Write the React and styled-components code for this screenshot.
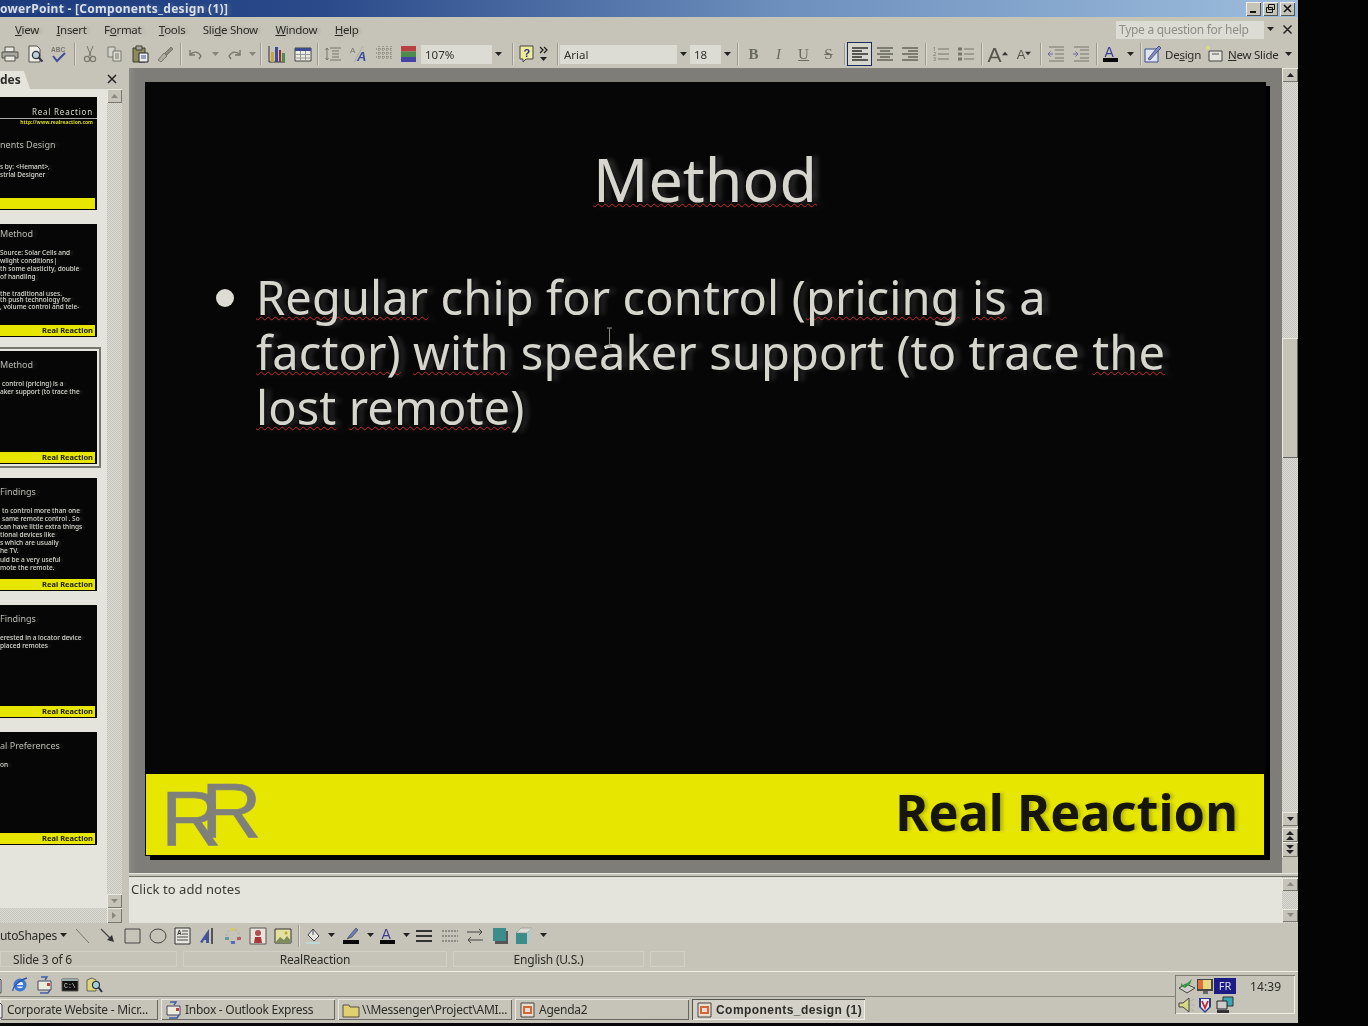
import React from "react";
import styled, { createGlobalStyle, css } from "styled-components";

const UI = `"Noto Sans", "Open Sans", "Liberation Sans", sans-serif`;
const FACE = "#c6c4b8";
const PAPER = "#e4e4dc";
const DITHER = css`
  background: repeating-conic-gradient(#dcdcd4 0 25%, #c4c4ba 0 50%) 0 0 / 2px 2px;
`;

const Global = createGlobalStyle`
  html, body { margin: 0; padding: 0; background: #050505; }
  body { font-family: ${UI}; }
`;

const Screen = styled.div`
  width: 1368px;
  height: 1026px;
  background: linear-gradient(90deg, #0a0d0a 0, #050505 40px, #0b070b 70px, #040404 100%);
  overflow: hidden;
`;
const Window = styled.div`
  width: 1298px;
  height: 1023px;
  display: flex;
  flex-direction: column;
  background: ${FACE};
  overflow: hidden;
  filter: blur(0.45px);
  color: #2c2c28;
  font-size: 12px;
`;

const TitleBar = styled.div`
  height: 17px;
  flex: none;
  display: flex;
  align-items: center;
  justify-content: space-between;
  padding-right: 3px;
  background: linear-gradient(90deg, #1c3a7c 0, #2a4a8a 25%, #6c8fbd 60%, #9dbcdc 100%);
`;
const TitleText = styled.span`
  font-weight: 700;
  font-size: 12px;
  color: #d9dfe9;
  letter-spacing: 0.28px;
  text-shadow: 3px 0 3px rgba(255, 255, 255, 0.15);
`;
const Caption = styled.div`
  display: flex;
  gap: 2px;
`;
const CaptionBtn = styled.span`
  width: 15px;
  height: 14px;
  background: ${FACE};
  box-shadow: inset 1px 1px 0 #eeeee6, inset -1px -1px 0 #55554f;
  display: flex;
  align-items: center;
  justify-content: center;
`;

const MenuBar = styled.div`
  height: 25px;
  flex: none;
  display: flex;
  align-items: center;
  justify-content: space-between;
  padding: 0 5px 0 15px;
`;
const Menus = styled.div`
  display: flex;
  gap: 17.5px;
`;
const Menu = styled.span`
  font-size: 11.5px;
  letter-spacing: -0.3px;
  text-shadow: 3px 0 3px rgba(0, 0, 0, 0.12);
  u { text-underline-offset: 1px; }
`;
const HelpWrap = styled.div`
  display: flex;
  align-items: center;
  gap: 6px;
`;
const HelpBox = styled.div`
  width: 160px;
  height: 18px;
  background: #dcdcd4;
  color: #8e8e86;
  font-size: 12px;
  letter-spacing: -0.28px;
  display: flex;
  align-items: center;
  justify-content: space-between;
  padding-left: 3px;
  box-sizing: border-box;
`;
const HelpArrow = styled.span`
  width: 12px;
  height: 100%;
  background: ${FACE};
  display: flex;
  align-items: center;
  justify-content: center;
`;

const ToolBar = styled.div`
  height: 26px;
  flex: none;
  display: flex;
  align-items: center;
  margin-left: -3px;
  padding-bottom: 2px;
  box-sizing: border-box;
`;
const Tool = styled.span`
  flex: none;
  width: ${(p) => p.$w || 25}px;
  height: 24px;
  box-sizing: border-box;
  display: flex;
  align-items: center;
  justify-content: center;
  font-size: 12px;
  ${(p) =>
    p.$on &&
    css`
      border: 1px solid #1c2c5c;
      background: #d6d6cc;
    `}
`;
const Sep = styled.span`
  flex: none;
  width: ${(p) => p.$w || 6}px;
  height: 22px;
  display: flex;
  justify-content: center;
  &::before {
    content: "";
    width: 1px;
    background: #9a9a90;
    box-shadow: 1px 0 0 #dedcd2;
  }
`;
const Combo = styled.span`
  flex: none;
  width: ${(p) => p.$w}px;
  height: 19px;
  background: #dcdcd4;
  display: flex;
  align-items: center;
  justify-content: space-between;
  box-sizing: border-box;
  padding-left: 4px;
  font-size: 11.5px;
  color: #33332e;
`;
const ComboArrow = styled.span`
  width: 13px;
  height: 100%;
  background: ${FACE};
  display: flex;
  align-items: center;
  justify-content: center;
`;
const StyleLetter = styled.span`
  font-family: "Liberation Serif", serif;
  font-size: 15px;
  color: #6a6a62;
  font-weight: ${(p) => (p.$b ? 700 : 400)};
  font-style: ${(p) => (p.$i ? "italic" : "normal")};
  text-decoration: ${(p) => (p.$u ? "underline" : p.$s ? "line-through" : "none")};
`;
const BigA = styled.span`
  font-family: "Liberation Sans", sans-serif;
  font-size: ${(p) => p.$size}px;
  font-weight: 400;
  color: #55554e;
  line-height: 1;
`;
const ButtonLabel = styled.span`
  flex: none;
  width: ${(p) => p.$w}px;
  padding-left: ${(p) => p.$pad || 0}px;
  box-sizing: border-box;
  font-size: 11.5px;
  letter-spacing: -0.25px;
  white-space: nowrap;
  u { text-underline-offset: 1px; }
`;

const Editor = styled.div`
  height: 855px;
  flex: none;
  display: flex;
`;

const Panel = styled.aside`
  width: 129px;
  flex: none;
  display: flex;
  flex-direction: column;
`;
const PanelHead = styled.div`
  height: 21px;
  flex: none;
  display: flex;
  align-items: flex-end;
  justify-content: space-between;
  padding-right: 12px;
`;
const PanelTab = styled.span`
  width: 30px;
  height: 18px;
  background: ${PAPER};
  clip-path: polygon(0 0, 24px 0, 100% 100%, 0 100%);
  font-weight: 700;
  font-size: 12px;
  line-height: 18px;
`;
const PanelClose = styled.span`
  align-self: center;
  display: flex;
  margin-top: 1px;
`;
const PanelBody = styled.div`
  flex: 1;
  min-height: 0;
  display: flex;
  width: 122px;
`;
const ThumbList = styled.div`
  width: 107px;
  flex: none;
  background: ${PAPER};
  padding-top: 8px;
  box-sizing: border-box;
  display: flex;
  flex-direction: column;
  gap: 14px;
  overflow: hidden;
`;
const Thumb = styled.div`
  width: 97px;
  height: 113px;
  flex: none;
  background: #060606;
  color: #d8d8d0;
  display: flex;
  flex-direction: column;
  ${(p) =>
    p.$selected &&
    css`
      box-shadow: 0 0 0 2px #e8e8e0, 0 0 0 4px #77776f;
    `}
`;
const ThumbContent = styled.div`
  flex: 1;
  min-height: 0;
  overflow: hidden;
`;
const ThumbBrand = styled.div`
  font-size: 8px;
  letter-spacing: 0.8px;
  text-align: right;
  padding: 9px 4px 1px 0;
  border-bottom: 1px solid #aaa;
  white-space: nowrap;
`;
const ThumbUrl = styled.div`
  font-size: 5px;
  line-height: 7px;
  font-weight: 700;
  color: #dede10;
  text-align: right;
  padding-right: 4px;
`;
const ThumbTitle = styled.div`
  font-size: 9px;
  line-height: 12px;
  color: #b8b8b0;
  margin-top: ${(p) => p.$top ?? 4}px;
  white-space: nowrap;
  text-shadow: 4px 0 3px rgba(255, 255, 255, 0.12);
`;
const ThumbLine = styled.div`
  font-size: 6.5px;
  line-height: ${(p) => p.$h || 8}px;
  height: ${(p) => p.$h || 8}px;
  margin-top: ${(p) => p.$top || 0}px;
  padding-left: ${(p) => p.$x || 0}px;
  font-weight: 500;
  white-space: nowrap;
  text-shadow: 3px 0 2px rgba(255, 255, 255, 0.14);
`;
const ThumbFoot = styled.div`
  height: 11px;
  flex: none;
  margin: 0 2px 1px 0;
  background: #e6e600;
  color: #20200a;
  font-size: 7.5px;
  font-weight: 700;
  line-height: 11px;
  text-align: right;
  padding-right: 2px;
  white-space: nowrap;
`;
const ThumbScroll = styled.div`
  width: 15px;
  flex: none;
  display: flex;
  flex-direction: column;
  justify-content: space-between;
  ${DITHER}
`;
const ScrollBtn = styled.span`
  width: ${(p) => p.$w || 15}px;
  height: ${(p) => p.$h || 14}px;
  flex: none;
  background: ${FACE};
  box-shadow: inset 1px 1px 0 #e8e8e0, inset -1px -1px 0 #77776f;
  display: flex;
  align-items: center;
  justify-content: center;
`;
const HScroll = styled.div`
  height: 15px;
  width: 122px;
  flex: none;
  display: flex;
  justify-content: flex-end;
  ${DITHER}
`;

const Center = styled.main`
  flex: 1;
  min-width: 0;
  display: flex;
  flex-direction: column;
`;
const UpperRow = styled.div`
  height: 805px;
  flex: none;
  display: flex;
`;
const Workspace = styled.div`
  flex: 1;
  min-width: 0;
  background: linear-gradient(90deg, #8a8984 0, #7e7d78 8px);
  padding: 14px 0 0 17px;
`;
const Slide = styled.section`
  width: 1120px;
  height: 774px;
  background: #060606;
  box-shadow: -1px 0 0 #000, 4px 4px 0 #000;
  display: flex;
  flex-direction: column;
  position: relative;
  color: #d6d6ce;
`;
const SlideBody = styled.div`
  flex: 1;
  min-height: 0;
  display: flex;
  flex-direction: column;
`;
const SlideTitle = styled.h1`
  margin: 57px 0 0;
  font-family: "Noto Sans", sans-serif;
  font-size: 61px;
  line-height: 80px;
  font-weight: 400;
  text-align: center;
  padding-right: 2px;
  text-shadow: 6px 0 5px rgba(255, 255, 255, 0.14);
`;
const Bullet = styled.div`
  display: flex;
  align-items: flex-start;
  margin: 51px 0 0 70px;
`;
const Dot = styled.span`
  width: 18px;
  height: 18px;
  border-radius: 50%;
  background: #dcdcd4;
  flex: none;
  margin: 19px 22px 0 0;
`;
const BulletText = styled.div`
  font-size: 47px;
  line-height: 55px;
  white-space: nowrap;
  letter-spacing: 0.1px;
  text-shadow: 6px 0 5px rgba(255, 255, 255, 0.14);
`;
const Misspelled = styled.span`
  text-decoration: underline wavy #c22a2a 1px;
  text-underline-offset: 1px;
  text-decoration-skip-ink: none;
`;
const SlideFoot = styled.footer`
  height: 81px;
  flex: none;
  margin: 0 2px 1px 0;
  background: #e6e600;
  display: flex;
  align-items: center;
  justify-content: space-between;
  padding: 0 26px 0 21px;
`;
const Logo = styled.div`
  width: 92px;
  height: 62px;
  position: relative;
  font-family: "Liberation Sans", sans-serif;
  font-size: 77px;
  line-height: 62px;
  color: #80807a;
  -webkit-text-stroke: 0.6px #80807a;
`;
const LogoLetter = styled.span`
  position: absolute;
  left: ${(p) => p.$x}px;
  top: ${(p) => p.$y}px;
  transform: scaleX(1.09);
  transform-origin: 0 50%;
`;
const Brand = styled.div`
  font-family: "Noto Sans", sans-serif;
  font-weight: 700;
  font-size: 50.5px;
  color: #16160a;
  white-space: nowrap;
  margin-top: -6px;
  text-shadow: 3px 0 3px rgba(60, 60, 0, 0.25);
`;
const Ibeam = styled.svg`
  position: absolute;
  left: 460px;
  top: 245px;
`;

const MainScroll = styled.div`
  width: 16px;
  flex: none;
  display: flex;
  flex-direction: column;
  background: ${FACE};
`;
const Track = styled.div`
  height: 730px;
  flex: none;
  ${DITHER}
  padding-top: 256px;
  box-sizing: border-box;
`;
const ScrollThumb = styled.div`
  height: 120px;
  background: ${FACE};
  box-shadow: inset 1px 1px 0 #e8e8e0, inset -1px -1px 0 #66665f;
`;
const ScrollGap = styled.div`
  height: 2px;
  flex: none;
`;
const NotesGap = styled.div`
  height: 3px;
  flex: none;
  border-bottom: 1px solid #6e6e68;
  box-shadow: inset 0 1px 0 #e8e8e0;
`;
const NotesRow = styled.div`
  flex: 1;
  min-height: 0;
  display: flex;
`;
const Notes = styled.div`
  flex: 1;
  background: ${PAPER};
  padding: 3px 0 0 2px;
  font-size: 13px;
  line-height: 18px;
  letter-spacing: 0.07px;
  color: #3a3a34;
`;
const NotesScroll = styled.div`
  width: 16px;
  flex: none;
  display: flex;
  flex-direction: column;
  justify-content: space-between;
  padding: 1px 0;
  ${DITHER}
`;

const DrawBar = styled.div`
  height: 25px;
  flex: none;
  display: flex;
  align-items: center;
`;
const AutoShapes = styled.span`
  width: 70px;
  flex: none;
  display: flex;
  align-items: center;
  gap: 3px;
  font-size: 12px;
  letter-spacing: -0.3px;
`;
const StatusBar = styled.div`
  height: 23px;
  flex: none;
  display: flex;
  align-items: center;
  padding-bottom: 1px;
  box-sizing: border-box;
`;
const StatusCell = styled.span`
  width: ${(p) => p.$w}px;
  margin-right: 6px;
  height: 16px;
  flex: none;
  box-sizing: border-box;
  box-shadow: inset 0 0 0 1px #d2d0c6;
  font-size: 12px;
  line-height: 17px;
  letter-spacing: -0.2px;
  text-align: ${(p) => (p.$left ? "left" : "center")};
  padding-left: ${(p) => (p.$left ? 13 : 0)}px;
`;

const Bottom = styled.footer`
  flex: 1;
  min-height: 0;
  display: flex;
  border-top: 1px solid #eeeee6;
`;
const TaskArea = styled.div`
  width: 1175px;
  flex: none;
  display: flex;
  flex-direction: column;
`;
const Quick = styled.div`
  height: 25px;
  flex: none;
  border-bottom: 1px solid #85857d;
  display: flex;
  align-items: center;
  padding-top: 2px;
  box-sizing: border-box;
  margin-left: -18px;
`;
const QuickIcon = styled.span`
  width: 25px;
  flex: none;
  display: flex;
  justify-content: center;
`;
const Tasks = styled.div`
  flex: 1;
  display: flex;
  gap: 3px;
  padding-top: 2px;
`;
const Task = styled.div`
  width: ${(p) => p.$w}px;
  height: 21px;
  flex: none;
  box-sizing: border-box;
  display: flex;
  align-items: center;
  gap: 2px;
  padding-left: ${(p) => p.$pad ?? 4}px;
  font-size: 12px;
  letter-spacing: -0.25px;
  white-space: nowrap;
  overflow: hidden;
  box-shadow: inset 1px 1px 0 #e8e8e0, inset -1px -1px 0 #66665f;
  ${(p) =>
    p.$active &&
    css`
      font-weight: 700;
      box-shadow: inset 1px 1px 0 #55554f, inset -1px -1px 0 #eeeee6;
      background: #d4d2c8;
      font-family: "Liberation Sans", sans-serif;
      letter-spacing: 0.45px;
    `}
`;
const Tray = styled.div`
  width: 120px;
  height: 39px;
  margin-top: 3px;
  flex: none;
  box-sizing: border-box;
  box-shadow: inset 1px 1px 0 #7e7e76, inset -1px -1px 0 #eeeee6;
  display: grid;
  grid-template-columns: 19px 18px 22px 1fr;
  grid-template-rows: 20px 17px;
  padding: 1px 0 0 2px;
  align-items: center;
  justify-items: center;
`;
const Lang = styled.span`
  width: 22px;
  height: 16px;
  background: #1c1c84;
  color: #dcdcf0;
  font-size: 11px;
  text-align: center;
  line-height: 16px;
`;
const Clock = styled.span`
  font-size: 12px;
  letter-spacing: 0.1px;
  justify-self: start;
  padding-left: 14px;
`;

const Tri = ({ dir = "down", c = "#222", s = 7 }) => {
  const pts = {
    down: "0,1 7,1 3.5,5",
    up: "0,5 7,5 3.5,1",
    right: "1,0 1,7 5,3.5",
  }[dir];
  return (
    <svg width={s} height={s} viewBox="0 0 7 7">
      <polygon points={pts} fill={c} />
    </svg>
  );
};

const I = ({ children, w = 18, h = 18, vb = "0 0 18 18" }) => (
  <svg width={w} height={h} viewBox={vb} fill="none" style={{ flex: "none" }}>
    {children}
  </svg>
);
const G = "#77776e";
const Ln = "#55554e";

const lines = (rows, c = Ln, sw = 1) =>
  rows.map(([x1, y, x2], i) => <path key={i} d={`M${x1} ${y}H${x2}`} stroke={c} strokeWidth={sw} />);

const Icons = {
  print: (
    <I>
      <path d="M4 2h9v5H4z" fill="#e8e8e0" stroke={Ln} />
      <path d="M1 7h16v6H1z" fill="#a8a8a0" stroke={Ln} />
      <path d="M4 11h10v5H4z" fill="#e8e8e0" stroke={Ln} />
    </I>
  ),
  preview: (
    <I>
      <path d="M3 1h8l3 3v13H3z" fill="#efefe8" stroke={Ln} />
      <circle cx="10" cy="10" r="3.6" fill="#bcd2d8" stroke="#334" strokeWidth="1.3" />
      <path d="M12.5 12.5l4 4" stroke="#334" strokeWidth="2" />
    </I>
  ),
  spell: (
    <I>
      <text x="1" y="7" fontSize="6.5" fontWeight="700" fill={G} fontFamily="Liberation Sans">ABC</text>
      <path d="M3 11l4 5 8-8" stroke="#3c4c9c" strokeWidth="2" />
    </I>
  ),
  cut: (
    <I>
      <path d="M6 1l4 10M12 1L8 11" stroke={G} />
      <circle cx="6" cy="14" r="2.6" stroke={G} strokeWidth="1.2" />
      <circle cx="12" cy="14" r="2.6" stroke={G} strokeWidth="1.2" />
    </I>
  ),
  copy: (
    <I>
      <path d="M2 2h7v10H2z" fill="#d4d4ca" stroke={G} />
      <path d="M7 6h8v10H7z" fill="#dcdcd2" stroke={G} />
      {lines([[9, 9, 13], [9, 11, 13], [9, 13, 13]], G)}
    </I>
  ),
  paste: (
    <I>
      <path d="M2 3h12v14H2z" fill="#8e8a5c" stroke="#3c3c30" />
      <path d="M5 1h6v4H5z" fill="#a8a8a0" stroke="#3c3c30" />
      <path d="M8 8h9v9H8z" fill="#eeeee8" stroke="#223" />
      {lines([[10, 11, 15], [10, 13, 15]], "#3c4c9c")}
    </I>
  ),
  painter: (
    <I>
      <path d="M2 15l6-7 3 3-6 6z" fill="#b0aea2" stroke={G} />
      <path d="M9 8l6-6 2 2-6 6z" fill="#8c8c82" stroke={G} />
    </I>
  ),
  undo: (
    <I>
      <path d="M3 5v5h5" stroke={G} strokeWidth="1.4" />
      <path d="M3 10c3-4 8-4 11 1l-2 3" stroke={G} strokeWidth="1.4" />
    </I>
  ),
  redo: (
    <I>
      <path d="M15 5v5h-5" stroke={G} strokeWidth="1.4" />
      <path d="M15 10c-3-4-8-4-11 1l2 3" stroke={G} strokeWidth="1.4" />
    </I>
  ),
  chart: (
    <I>
      <path d="M1 1v16h16" stroke="#333" />
      <path d="M3 7h3v10H3z" fill="#c8a63c" />
      <path d="M7 2h3v15H7z" fill="#3c4c9c" />
      <path d="M11 5h2v12h-2z" fill="#9c2c2c" />
      <path d="M14 8h3v9h-3z" fill="#4c8c4c" />
    </I>
  ),
  table: (
    <I>
      <path d="M1 3h16v13H1z" fill="#ececE6" stroke="#444" />
      <path d="M1 3h16v3H1z" fill="#3c4c8c" />
      <path d="M6.5 6v10M11.5 6v10M1 9.5h16M1 13h16" stroke="#9a9a90" />
    </I>
  ),
  expand: (
    <I>
      <path d="M3 3v12M1.5 5L3 3l1.5 2M1.5 13L3 15l1.5-2" stroke={G} />
      {lines([[6, 3, 17], [8, 6, 15], [8, 9, 15], [8, 12, 15], [6, 15, 17]], G)}
    </I>
  ),
  formatA: (
    <I>
      <text x="0" y="8" fontSize="8" fill={G} fontFamily="Liberation Sans">A</text>
      <text x="7" y="16" fontSize="13" fontWeight="700" fontStyle="italic" fill="#3c4c9c" fontFamily="Liberation Sans">A</text>
      <path d="M4 17L13 1" stroke="#aaa" />
    </I>
  ),
  grid: (
    <I>
      <path d="M1 4h16M1 8h16M1 12h16M4 1v14M8 1v14M12 1v14M16 1v14" stroke={G} strokeDasharray="1 1" />
    </I>
  ),
  color: (
    <I>
      <path d="M1 1h15v5.5H1z" fill="#b84040" />
      <path d="M1 6.5h15V12H1z" fill="#4c8c4c" />
      <path d="M1 12h15v5H1z" fill="#4444a4" />
    </I>
  ),
  help: (
    <I>
      <path d="M2 1h13v13H8l-3 3v-3H2z" fill="#ecec9c" stroke="#444" />
      <text x="5.5" y="12" fontSize="11" fontWeight="700" fill="#2c2c84" fontFamily="Liberation Sans">?</text>
    </I>
  ),
  more: (
    <I>
      <path d="M5 2l3 3-3 3M9 2l3 3-3 3" stroke="#222" strokeWidth="1.3" />
      <path d="M5 12h7l-3.5 4z" fill="#222" />
    </I>
  ),
  alignL: <I>{lines([[1, 3, 17], [1, 6, 11], [1, 9, 17], [1, 12, 11], [1, 15, 17]], "#111", 1.3)}</I>,
  alignC: <I>{lines([[1, 3, 17], [4, 6, 14], [1, 9, 17], [4, 12, 14], [1, 15, 17]], Ln, 1.3)}</I>,
  alignR: <I>{lines([[1, 3, 17], [7, 6, 17], [1, 9, 17], [7, 12, 17], [1, 15, 17]], Ln, 1.3)}</I>,
  numList: (
    <I>
      <text x="1" y="6" fontSize="5.5" fill={G}>1</text>
      <text x="1" y="11" fontSize="5.5" fill={G}>2</text>
      <text x="1" y="16" fontSize="5.5" fill={G}>3</text>
      {lines([[6, 4, 17], [6, 9, 17], [6, 14, 17]], G)}
    </I>
  ),
  bullets: (
    <I>
      <path d="M1 2.5h4v3H1zM1 7.5h4v3H1zM1 12.5h4v3H1z" fill={G} />
      {lines([[7, 4, 17], [7, 9, 17], [7, 14, 17]], G)}
    </I>
  ),
  indentL: (
    <I>
      <path d="M6 9H1M3.5 6.5L1 9l2.5 2.5" stroke="#6a6a9c" />
      {lines([[2, 2, 17], [8, 5, 17], [8, 9, 17], [8, 13, 17], [2, 16, 17]], G)}
    </I>
  ),
  indentR: (
    <I>
      <path d="M1 9h5M3.5 6.5L6 9l-2.5 2.5" stroke="#6a6a9c" />
      {lines([[2, 2, 17], [8, 5, 17], [8, 9, 17], [8, 13, 17], [2, 16, 17]], G)}
    </I>
  ),
  fontColor: (
    <I>
      <text x="2.5" y="12" fontSize="14" fill="#3c3c94" fontFamily="Liberation Sans">A</text>
      <path d="M1 13h15v4H1z" fill="#080808" />
    </I>
  ),
  design: (
    <I>
      <path d="M1 4h13v13H1z" fill="#dfe4f0" stroke="#3c4c8c" />
      <path d="M4 14l8-10 3-3 2 2-3 3-8 9z" fill="#7d8ccc" stroke="#446" strokeWidth=".8" />
    </I>
  ),
  newSlide: (
    <I>
      <path d="M4 6h13v10H4z" fill="#e4e4dc" stroke="#444" />
      <path d="M7 9h7" stroke="#555" />
      <path d="M3 1v4M1 3h4M1 1l4 4M5 1L1 5" stroke="#dcdc80" />
    </I>
  ),
  lineTool: (
    <I>
      <path d="M2 2l13 14" stroke={G} />
    </I>
  ),
  arrowTool: (
    <I>
      <path d="M2 2l10 10" stroke="#444" strokeWidth="1.2" />
      <path d="M15 15l-7-2 5-5z" fill="#333" />
    </I>
  ),
  rect: (
    <I>
      <path d="M1 2h15v14H1z" stroke="#444" />
    </I>
  ),
  oval: (
    <I>
      <ellipse cx="9" cy="9" rx="8" ry="7" stroke="#444" />
    </I>
  ),
  textbox: (
    <I>
      <path d="M1 1h15v16H1z" fill="#e8e8e0" stroke="#333" />
      <text x="3" y="8" fontSize="6.5" fontWeight="700" fill="#333" fontFamily="Liberation Sans">A</text>
      {lines([[8, 4, 14], [8, 7, 14], [3, 10, 14], [3, 13, 14]], "#444")}
    </I>
  ),
  wordart: (
    <I>
      <path d="M1 15L10 2v14h-3l.2-3H5l-1.5 3z" fill="#44549c" />
      <path d="M13 1v16" stroke="#555" strokeWidth="2" />
    </I>
  ),
  diagram: (
    <I>
      <circle cx="9" cy="9" r="6.5" stroke="#aaa" strokeDasharray="2 2" />
      <path d="M7 1h4v3H7z" fill="#d8c858" />
      <path d="M1 10h4v3H1z" fill="#5c9c9c" />
      <path d="M13 10h4v3h-4z" fill="#b46060" />
      <path d="M7 14h4v3H7z" fill="#5c6cbc" />
    </I>
  ),
  clipart: (
    <I>
      <path d="M1 1h16v16H1z" fill="#e8e4dc" stroke="#555" />
      <circle cx="9" cy="6" r="3" fill="#b05050" />
      <path d="M5 16l1-6h6l1 6z" fill="#a83838" />
    </I>
  ),
  picture: (
    <I>
      <path d="M1 2h16v14H1z" fill="#e4e0a0" stroke="#333" />
      <path d="M1 16l5-6 4 3 3-4 4 5v2H1z" fill="#7c8c5c" />
      <circle cx="12" cy="6" r="1.5" fill="#c8a030" />
    </I>
  ),
  fill: (
    <I>
      <path d="M3 8l5-6 6 7-5 5z" fill="#e8e8e0" stroke="#445" />
      <path d="M8 2v6" stroke="#445" />
      <path d="M1 15h14v2H1z" fill="#bcd8d8" />
    </I>
  ),
  lineColor: (
    <I>
      <path d="M5 12l3-4 6-7 2 2-6 7z" fill="#6c7cbc" stroke="#445" strokeWidth=".7" />
      <path d="M1 13h16v4H1z" fill="#080808" />
    </I>
  ),
  lineStyle: <I>{lines([[1, 4, 17], [1, 9, 17], [1, 14, 17]], "#333", 2)}</I>,
  dashStyle: (
    <I>
      <path d="M1 4h16M1 9h16M1 14h16" stroke="#555" strokeDasharray="2 1" />
    </I>
  ),
  arrows: (
    <I>
      <path d="M1 5h15M13 2l3 3-3 3M17 13H2M5 10l-3 3 3 3" stroke="#444" />
    </I>
  ),
  shadow: (
    <I>
      <path d="M4 4h13v13H4z" fill="#555" />
      <path d="M2 1h13v13H2z" fill="#3c8c8c" />
    </I>
  ),
  cube: (
    <I>
      <path d="M1 6h11v11H1z" fill="#3c8c8c" />
      <path d="M1 6l5-5h11l-5 5z" fill="#dcdcd4" stroke="#888" strokeWidth=".6" />
      <path d="M12 6l5-5v10l-5 6z" fill="#b8c8c4" />
    </I>
  ),
  ie: (
    <I>
      <circle cx="9" cy="9" r="6.5" fill="#3c78d0" />
      <circle cx="9" cy="9" r="3.2" fill="#e8f0f8" />
      <path d="M5 9h8v1.5H5z" fill="#3c78d0" />
      <path d="M2 15c-1-3 6-11 14-13" stroke="#3454a4" strokeWidth="1.3" />
    </I>
  ),
  outlook: (
    <I>
      <path d="M2 5h13v9H2z" fill="#ececdc" stroke="#446" />
      <path d="M11 7h3v3h-3z" fill="#c04040" />
      <path d="M5 1h6l-2 3M4 17h8l2-3" stroke="#3c5ca4" strokeWidth="1.4" />
    </I>
  ),
  cmd: (
    <I>
      <path d="M1 3h16v12H1z" fill="#111" stroke="#555" />
      <path d="M1 3h16v2H1z" fill="#9aa" />
      <text x="3" y="12" fontSize="6.5" fill="#ddd" fontFamily="Liberation Mono">C:\</text>
    </I>
  ),
  find: (
    <I>
      <path d="M1 4l5-2 4 2v11H1z" fill="#e0d478" stroke="#665" />
      <circle cx="10" cy="9" r="3.5" fill="#a8d0d8" stroke="#234" strokeWidth="1.2" />
      <path d="M12.5 11.5L16 16" stroke="#234" strokeWidth="2" />
    </I>
  ),
  doc: (
    <I>
      <path d="M3 1h9l3 3v13H3z" fill="#ececE4" stroke="#445" />
    </I>
  ),
  folder: (
    <I>
      <path d="M1 4h6l1 2h9v10H1z" fill="#e0d070" stroke="#554" />
    </I>
  ),
  ppt: (
    <I>
      <path d="M2 2h13v14H2z" fill="#ecdcd0" stroke="#444" />
      <path d="M4 5h9v8H4z" fill="#d06838" />
      <path d="M6 7h5v4H6z" fill="#ecdcd0" />
    </I>
  ),
  tray1: (
    <I>
      <path d="M1 11l7-4 9 4-8 5z" fill="#d0d0c8" stroke="#444" />
      <path d="M3 6l3 3 8-7-2 5-5 4-4-2z" fill="#2c9c3c" />
    </I>
  ),
  tray2: (
    <I>
      <path d="M1 2h16v12H1z" fill="#444" />
      <path d="M2 3h13v9H2z" fill="#e8d880" />
      <path d="M2 3h5v9H2z" fill="#d85828" opacity=".8" />
      <path d="M7 14h5v3H7z" fill="#666" />
    </I>
  ),
  speaker: (
    <I>
      <path d="M1 7h4l6-5v14l-6-5H1z" fill="#d8d880" stroke="#444" />
      <path d="M13 5l3-2M13 9h4M13 13l3 2" stroke="#aaa" />
    </I>
  ),
  shield: (
    <I>
      <path d="M3 2h12v9l-6 6-6-6z" fill="#2c3c8c" />
      <path d="M5 3h8v8l-4 4-4-4z" fill="#e8e8f0" />
      <path d="M6 5l3 7 3-7" stroke="#c02828" strokeWidth="1.8" />
    </I>
  ),
  network: (
    <I>
      <path d="M7 1h10v9H7z" fill="#38a8b8" stroke="#333" />
      <path d="M1 5h10v8H1z" fill="#ccc" stroke="#222" />
      <path d="M1 14h12v3H1z" fill="#333" />
    </I>
  ),
};

const Ic = ({ n, w, ...rest }) => <Tool $w={w} {...rest}>{Icons[n]}</Tool>;
const Drop = ({ w = 10 }) => <Tool $w={w}><Tri /></Tool>;
const GreyDrop = ({ w = 12 }) => <Tool $w={w}><Tri c="#85857c" /></Tool>;

const THUMBS = [
  {
    id: 1,
    brand: true,
    title: "nents Design",
    titleTop: 13,
    lines: [
      { t: "s by: <Hemant>,", top: 12 },
      { t: "strial Designer" },
    ],
    noFootText: true,
  },
  {
    id: 2,
    title: "Method",
    lines: [
      { t: "Source: Solar Cells and", top: 9, h: 7.5 },
      { t: "wlight conditions|", h: 7.5 },
      { t: "th some elasticity, double", top: 1, h: 7.5 },
      { t: "of handling", h: 7.5 },
      { t: "the traditional uses.", top: 10, h: 7 },
      { t: "th push technology for", h: 6.5 },
      { t: ", volume control and tele-", h: 6.5 },
    ],
  },
  {
    id: 3,
    selected: true,
    title: "Method",
    titleTop: 8,
    lines: [
      { t: "control (pricing) is a", top: 9, x: 2 },
      { t: "aker support (to trace the" },
    ],
  },
  {
    id: 4,
    title: "Findings",
    titleTop: 8,
    lines: [
      { t: "to control more than one", top: 9, x: 2 },
      { t: "same remote control . So", x: 2 },
      { t: "can have little extra things" },
      { t: "tional devices like" },
      { t: "s which are usually" },
      { t: "he TV." },
      { t: "uld be a very useful", top: 1 },
      { t: "mote the remote." },
    ],
  },
  {
    id: 5,
    title: "Findings",
    titleTop: 8,
    lines: [
      { t: "erested in a locator device", top: 9 },
      { t: "placed remotes" },
    ],
  },
  {
    id: 6,
    title: "al Preferences",
    titleTop: 8,
    lines: [{ t: "on", top: 9 }],
  },
];

const TEXT_STYLES = [
  { l: "B", b: true },
  { l: "I", i: true },
  { l: "U", u: true },
  { l: "S", s: true },
];

export default function App() {
  return (
    <Screen>
      <Global />
      <Window>
        <TitleBar>
          <TitleText>owerPoint - [Components_design (1)]</TitleText>
          <Caption>
            <CaptionBtn>
              <svg width="9" height="9" viewBox="0 0 9 9"><path d="M1 7h6v2H1z" fill="#111" /></svg>
            </CaptionBtn>
            <CaptionBtn>
              <svg width="11" height="11" viewBox="0 0 11 11" fill="none"><path d="M3.5 1.5h6v5h-6zM1.5 4.5h6v5h-6z" stroke="#111" fill="#c6c4b8" /></svg>
            </CaptionBtn>
            <CaptionBtn>
              <svg width="9" height="9" viewBox="0 0 9 9"><path d="M1 1l7 7M8 1L1 8" stroke="#111" strokeWidth="1.6" /></svg>
            </CaptionBtn>
          </Caption>
        </TitleBar>

        <MenuBar>
          <Menus>
            <Menu><u>V</u>iew</Menu>
            <Menu><u>I</u>nsert</Menu>
            <Menu>F<u>o</u>rmat</Menu>
            <Menu><u>T</u>ools</Menu>
            <Menu>Sli<u>d</u>e Show</Menu>
            <Menu><u>W</u>indow</Menu>
            <Menu><u>H</u>elp</Menu>
          </Menus>
          <HelpWrap>
            <HelpBox>
              Type a question for help
              <HelpArrow><Tri /></HelpArrow>
            </HelpBox>
            <svg width="11" height="11" viewBox="0 0 11 11"><path d="M1.5 1.5l8 8M9.5 1.5l-8 8" stroke="#222" strokeWidth="1.5" /></svg>
          </HelpWrap>
        </MenuBar>

        <ToolBar>
          <Ic n="print" />
          <Ic n="preview" />
          <Ic n="spell" w={24} />
          <Sep />
          <Ic n="cut" />
          <Ic n="copy" />
          <Ic n="paste" />
          <Ic n="painter" />
          <Sep />
          <Ic n="undo" w={26} />
          <GreyDrop />
          <Ic n="redo" w={26} />
          <GreyDrop w={10} />
          <Sep />
          <Ic n="chart" w={27} />
          <Ic n="table" />
          <Sep $w={5} />
          <Ic n="expand" w={26} />
          <Ic n="formatA" />
          <Ic n="grid" />
          <Ic n="color" />
          <Combo $w={84}>107%<ComboArrow><Tri /></ComboArrow></Combo>
          <Sep $w={14} />
          <Ic n="help" w={15} />
          <Ic n="more" w={20} />
          <Sep />
          <Combo $w={130}>Arial<ComboArrow><Tri /></ComboArrow></Combo>
          <Combo $w={44}>18<ComboArrow><Tri /></ComboArrow></Combo>
          <Sep $w={7} />
          {TEXT_STYLES.map((s) => (
            <Tool key={s.l}>
              <StyleLetter $b={s.b} $i={s.i} $u={s.u} $s={s.s}>{s.l}</StyleLetter>
            </Tool>
          ))}
          <Sep />
          <Ic n="alignL" $on />
          <Ic n="alignC" />
          <Ic n="alignR" />
          <Sep />
          <Ic n="numList" />
          <Ic n="bullets" />
          <Sep />
          <Tool $w={27}><BigA $size={21}>A</BigA><Tri dir="up" c="#333" s={6} /></Tool>
          <Tool $w={26}><BigA $size={13}>A</BigA><Tri c="#333" s={6} /></Tool>
          <Sep />
          <Ic n="indentL" />
          <Ic n="indentR" />
          <Sep />
          <Ic n="fontColor" w={24} />
          <Drop w={14} />
          <Sep />
          <Ic n="design" w={20} />
          <ButtonLabel $w={40} $pad={2}>De<u>s</u>ign</ButtonLabel>
          <Ic n="newSlide" w={22} />
          <ButtonLabel $w={55} $pad={3}><u>N</u>ew Slide</ButtonLabel>
          <Drop w={16} />
        </ToolBar>

        <Editor>
          <Panel>
            <PanelHead>
              <PanelTab>des</PanelTab>
              <PanelClose>
                <svg width="10" height="10" viewBox="0 0 10 10"><path d="M1 1l8 8M9 1l-8 8" stroke="#222" strokeWidth="1.5" /></svg>
              </PanelClose>
            </PanelHead>
            <PanelBody>
              <ThumbList>
                {THUMBS.map((t) => (
                  <Thumb key={t.id} $selected={t.selected}>
                    <ThumbContent>
                      {t.brand && (
                        <>
                          <ThumbBrand>Real Reaction</ThumbBrand>
                          <ThumbUrl>http://www.realreaction.com</ThumbUrl>
                        </>
                      )}
                      <ThumbTitle $top={t.titleTop}>{t.title}</ThumbTitle>
                      {t.lines.map((l, i) => (
                        <ThumbLine key={i} $top={l.top} $h={l.h} $x={l.x}>{l.t}</ThumbLine>
                      ))}
                    </ThumbContent>
                    <ThumbFoot>{t.noFootText ? "" : "Real Reaction"}</ThumbFoot>
                  </Thumb>
                ))}
              </ThumbList>
              <ThumbScroll>
                <ScrollBtn><Tri dir="up" c="#8a8a82" /></ScrollBtn>
                <ScrollBtn><Tri c="#8a8a82" /></ScrollBtn>
              </ThumbScroll>
            </PanelBody>
            <HScroll>
              <ScrollBtn $h={15}><Tri dir="right" c="#8a8a82" /></ScrollBtn>
            </HScroll>
          </Panel>

          <Center>
            <UpperRow>
              <Workspace>
                <Slide>
                  <SlideBody>
                    <SlideTitle><Misspelled>Method</Misspelled></SlideTitle>
                    <Bullet>
                      <Dot />
                      <BulletText>
                        <div><Misspelled>Regular</Misspelled> chip for control (<Misspelled>pricing</Misspelled> <Misspelled>is</Misspelled> a</div>
                        <div><Misspelled>factor)</Misspelled> <Misspelled>with</Misspelled> speaker support (to trace <Misspelled>the</Misspelled></div>
                        <div><Misspelled>lost</Misspelled> <Misspelled>remote</Misspelled>)</div>
                      </BulletText>
                    </Bullet>
                  </SlideBody>
                  <SlideFoot>
                    <Logo>
                      <LogoLetter $x={-6} $y={3}>R</LogoLetter>
                      <LogoLetter $x={34} $y={-5}>R</LogoLetter>
                    </Logo>
                    <Brand>Real Reaction</Brand>
                  </SlideFoot>
                  <Ibeam width="7" height="20" viewBox="0 0 7 20" fill="none">
                    <path d="M1 1h5M3.5 1v18M1 19h5" stroke="#8a8a84" />
                  </Ibeam>
                </Slide>
              </Workspace>
              <MainScroll>
                <ScrollBtn $w={16}><Tri dir="up" /></ScrollBtn>
                <Track><ScrollThumb /></Track>
                <ScrollBtn $w={16}><Tri /></ScrollBtn>
                <ScrollGap />
                <ScrollBtn $w={16}>
                  <svg width="8" height="9" viewBox="0 0 8 9"><path d="M0 4h8L4 0zM0 9h8L4 5z" fill="#222" /></svg>
                </ScrollBtn>
                <ScrollBtn $w={16} $h={15}>
                  <svg width="8" height="9" viewBox="0 0 8 9"><path d="M0 0h8L4 4zM0 5h8L4 9z" fill="#222" /></svg>
                </ScrollBtn>
              </MainScroll>
            </UpperRow>
            <NotesGap />
            <NotesRow>
              <Notes>Click to add notes</Notes>
              <NotesScroll>
                <ScrollBtn $w={16} $h={13}><Tri dir="up" c="#8a8a82" /></ScrollBtn>
                <ScrollBtn $w={16} $h={13}><Tri c="#8a8a82" /></ScrollBtn>
              </NotesScroll>
            </NotesRow>
          </Center>
        </Editor>

        <DrawBar>
          <AutoShapes>utoShapes<Tri /></AutoShapes>
          <Ic n="lineTool" />
          <Ic n="arrowTool" />
          <Ic n="rect" />
          <Ic n="oval" />
          <Ic n="textbox" />
          <Ic n="wordart" />
          <Ic n="diagram" />
          <Ic n="clipart" />
          <Ic n="picture" />
          <Sep $w={7} />
          <Ic n="fill" w={24} />
          <Drop />
          <Ic n="lineColor" w={29} />
          <Drop />
          <Ic n="fontColor" w={26} />
          <Drop />
          <Ic n="lineStyle" w={26} />
          <Ic n="dashStyle" />
          <Ic n="arrows" w={26} />
          <Ic n="shadow" w={23} />
          <Ic n="cube" w={26} />
          <Drop w={12} />
        </DrawBar>

        <StatusBar>
          <StatusCell $w={177} $left>Slide 3 of 6</StatusCell>
          <StatusCell $w={264}>RealReaction</StatusCell>
          <StatusCell $w={191}>English (U.S.)</StatusCell>
          <StatusCell $w={35} />
        </StatusBar>

        <Bottom>
          <TaskArea>
            <Quick>
              <QuickIcon>{Icons.doc}</QuickIcon>
              <QuickIcon>{Icons.ie}</QuickIcon>
              <QuickIcon>{Icons.outlook}</QuickIcon>
              <QuickIcon>{Icons.cmd}</QuickIcon>
              <QuickIcon>{Icons.find}</QuickIcon>
            </Quick>
            <Tasks>
              <Task $w={158} $pad={0}>
                <svg width="5" height="18" viewBox="13 0 5 18" fill="none"><path d="M3 1h9l3 3v13H3z" fill="#ececE4" stroke="#445" /></svg>
                Corporate Website - Micr...
              </Task>
              <Task $w={174}>{Icons.outlook}Inbox - Outlook Express</Task>
              <Task $w={174}>{Icons.folder}\\Messenger\Project\AMI...</Task>
              <Task $w={174}>{Icons.ppt}Agenda2</Task>
              <Task $w={173} $active>{Icons.ppt}Components_design (1)</Task>
            </Tasks>
          </TaskArea>
          <Tray>
            {Icons.tray1}
            {Icons.tray2}
            <Lang>FR</Lang>
            <Clock>14:39</Clock>
            {Icons.speaker}
            {Icons.shield}
            {Icons.network}
          </Tray>
        </Bottom>
      </Window>
    </Screen>
  );
}
